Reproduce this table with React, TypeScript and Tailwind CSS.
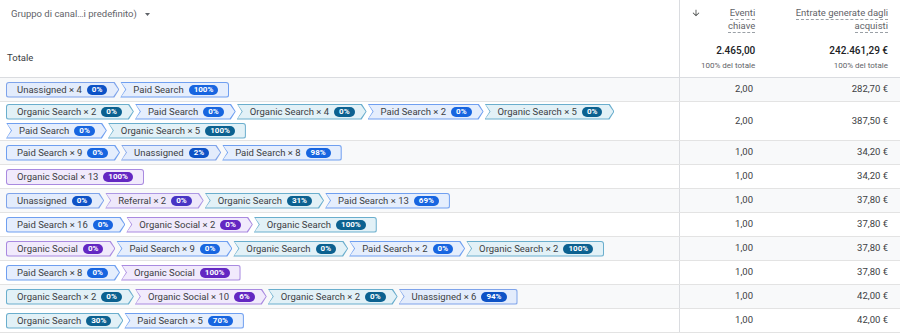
import React from "react";

type Kind = "unassigned" | "paid" | "organic" | "social" | "referral";
type Pos = "only" | "first" | "mid" | "last";

interface Step {
  label: string;
  pct: string;
  kind: Kind;
}

interface PathRow {
  steps: Step[];
  events: string;
  revenue: string;
}

const U = (label: string, pct: string): Step => ({ label, pct, kind: "unassigned" });
const P = (label: string, pct: string): Step => ({ label, pct, kind: "paid" });
const O = (label: string, pct: string): Step => ({ label, pct, kind: "organic" });
const S = (label: string, pct: string): Step => ({ label, pct, kind: "social" });
const R = (label: string, pct: string): Step => ({ label, pct, kind: "referral" });

const rows: PathRow[] = [
  { steps: [U("Unassigned × 4", "0%"), P("Paid Search", "100%")], events: "2,00", revenue: "282,70 €" },
  {
    steps: [
      O("Organic Search × 2", "0%"),
      P("Paid Search", "0%"),
      O("Organic Search × 4", "0%"),
      P("Paid Search × 2", "0%"),
      O("Organic Search × 5", "0%"),
      P("Paid Search", "0%"),
      O("Organic Search × 5", "100%"),
    ],
    events: "2,00",
    revenue: "387,50 €",
  },
  { steps: [P("Paid Search × 9", "0%"), U("Unassigned", "2%"), P("Paid Search × 8", "98%")], events: "1,00", revenue: "34,20 €" },
  { steps: [S("Organic Social × 13", "100%")], events: "1,00", revenue: "34,20 €" },
  {
    steps: [U("Unassigned", "0%"), R("Referral × 2", "0%"), O("Organic Search", "31%"), P("Paid Search × 13", "69%")],
    events: "1,00",
    revenue: "37,80 €",
  },
  { steps: [P("Paid Search × 16", "0%"), S("Organic Social × 2", "0%"), O("Organic Search", "100%")], events: "1,00", revenue: "37,80 €" },
  {
    steps: [
      S("Organic Social", "0%"),
      P("Paid Search × 9", "0%"),
      O("Organic Search", "0%"),
      P("Paid Search × 2", "0%"),
      O("Organic Search × 2", "100%"),
    ],
    events: "1,00",
    revenue: "37,80 €",
  },
  { steps: [P("Paid Search × 8", "0%"), S("Organic Social", "100%")], events: "1,00", revenue: "37,80 €" },
  {
    steps: [O("Organic Search × 2", "0%"), S("Organic Social × 10", "6%"), O("Organic Search × 2", "0%"), U("Unassigned × 6", "94%")],
    events: "1,00",
    revenue: "42,00 €",
  },
  { steps: [O("Organic Search", "30%"), P("Paid Search × 5", "70%")], events: "1,00", revenue: "42,00 €" },
];

const colors: Record<Kind, { edge: string; fill: string; badge: string }> = {
  unassigned: { edge: "bg-[#7ea3ea]", fill: "bg-[#e3ecfc]", badge: "bg-[#0d52c6]" },
  paid: { edge: "bg-[#6f9ff0]", fill: "bg-[#e5eefd]", badge: "bg-[#1765e0]" },
  organic: { edge: "bg-[#6aaecd]", fill: "bg-[#e2f1f7]", badge: "bg-[#0b6190]" },
  social: { edge: "bg-[#a98ae0]", fill: "bg-[#f1eafc]", badge: "bg-[#6327c2]" },
  referral: { edge: "bg-[#ad98e4]", fill: "bg-[#eee8fb]", badge: "bg-[#4734c4]" },
};

// chevron outlines, 5px deep
const shape: Record<Pos, { outer: string; inner: string; pad: string }> = {
  only: { outer: "rounded-[3px]", inner: "rounded-[2px]", pad: "pl-[10px] pr-[10px]" },
  first: {
    outer: "rounded-l-[3px] [clip-path:polygon(0_0,calc(100%_-_5px)_0,100%_50%,calc(100%_-_5px)_100%,0_100%)]",
    inner: "rounded-l-[2px] [clip-path:polygon(0_0,calc(100%_-_5px)_0,100%_50%,calc(100%_-_5px)_100%,0_100%)]",
    pad: "pl-[10px] pr-[11px]",
  },
  mid: {
    outer: "[clip-path:polygon(0_0,calc(100%_-_5px)_0,100%_50%,calc(100%_-_5px)_100%,0_100%,5px_50%)]",
    inner: "[clip-path:polygon(0_0,calc(100%_-_5px)_0,100%_50%,calc(100%_-_5px)_100%,0_100%,5px_50%)]",
    pad: "pl-[12px] pr-[11px]",
  },
  last: {
    outer: "rounded-r-[3px] [clip-path:polygon(0_0,100%_0,100%_100%,0_100%,5px_50%)]",
    inner: "rounded-r-[2px] [clip-path:polygon(0_0,100%_0,100%_100%,0_100%,5px_50%)]",
    pad: "pl-[12px] pr-[10px]",
  },
};

function Chip({ step, pos }: { step: Step; pos: Pos }) {
  const c = colors[step.kind];
  const s = shape[pos];
  return (
    <span className={`flex h-[16px] p-px ${c.edge} ${s.outer}`}>
      <span className={`flex h-full items-center whitespace-nowrap ${c.fill} ${s.inner} ${s.pad}`}>
        <span className="text-[9.5px] leading-[12px] text-[#3c4043]">{step.label}</span>
        <span
          className={`ml-[5px] h-[10px] rounded-full px-[5px] text-[8px] font-bold leading-[10px] text-white ${c.badge}`}
        >
          {step.pct}
        </span>
      </span>
    </span>
  );
}

function posOf(i: number, n: number): Pos {
  if (n === 1) return "only";
  if (i === 0) return "first";
  if (i === n - 1) return "last";
  return "mid";
}

function SortArrow() {
  return (
    <svg width="10" height="10" viewBox="0 0 24 24" className="fill-[#444746]">
      <path d="M20 12l-1.41-1.41L13 16.17V4h-2v12.17l-5.58-5.59L4 12l8 8 8-8z" />
    </svg>
  );
}

export default function App() {
  return (
    <div className="h-[334px] w-[900px] overflow-hidden bg-white [font-family:Roboto,sans-serif]">
      {/* Header */}
      <div className="grid h-[78px] grid-cols-[680px_85px_135px] border-b border-[#dadce0]">
        <div className="border-r border-[#dadce0] pt-[8px]">
          <div className="flex h-[12px] items-center pl-[11px]">
            <span className="text-[9.5px] leading-[12px] text-[#5f6368]">Gruppo di canal…i predefinito)</span>
            <svg width="5" height="3" viewBox="0 0 5 3" className="ml-[8px] fill-[#5f6368]">
              <path d="M0 0h5L2.5 3z" />
            </svg>
          </div>
          <div className="mt-[32px] pl-[7px] text-[9.5px] leading-[12px] text-[#3c4043]">Totale</div>
        </div>

        <div className="flex pl-[11px] pr-[12px] pt-[7px]">
          <div className="pt-px">
            <SortArrow />
          </div>
          <div className="flex flex-1 flex-col items-end whitespace-nowrap">
            <span className="border-b border-dashed border-[#9aa0a6] text-[9.5px] leading-[12px] text-[#5f6368]">Eventi</span>
            <span className="border-b border-dashed border-[#9aa0a6] text-[9.5px] leading-[12px] text-[#5f6368]">chiave</span>
            <span className="mt-[12px] text-[10px] font-medium leading-[12px] text-[#202124]">2.465,00</span>
            <span className="mt-[4px] text-[8px] leading-[10px] text-[#5f6368]">100% del totale</span>
          </div>
        </div>

        <div className="flex flex-col items-end whitespace-nowrap pr-[12px] pt-[7px]">
          <span className="border-b border-dashed border-[#9aa0a6] text-[9.5px] leading-[12px] text-[#5f6368]">
            Entrate generate dagli
          </span>
          <span className="border-b border-dashed border-[#9aa0a6] text-[9.5px] leading-[12px] text-[#5f6368]">acquisti</span>
          <span className="mt-[12px] text-[10px] font-medium leading-[12px] text-[#202124]">242.461,29 €</span>
          <span className="mt-[4px] text-[8px] leading-[10px] text-[#5f6368]">100% del totale</span>
        </div>
      </div>

      {/* Rows */}
      {rows.map((row, r) => (
        <div
          key={r}
          className={`grid grid-cols-[680px_85px_135px] border-b border-[#e3e3e3] ${r % 2 === 0 ? "bg-[#f8f9fa]" : "bg-white"}`}
        >
          <div className="flex min-h-[23px] flex-wrap content-center items-center gap-x-px gap-y-[3px] border-r border-[#dadce0] py-[1.5px] pl-[6px] pr-[8px]">
            {row.steps.map((s, i) => (
              <Chip key={i} step={s} pos={posOf(i, row.steps.length)} />
            ))}
          </div>
          <div className="flex items-center justify-end pr-[12px] text-[9.5px] text-[#3c4043]">{row.events}</div>
          <div className="flex items-center justify-end pr-[12px] text-[9.5px] text-[#3c4043]">{row.revenue}</div>
        </div>
      ))}
    </div>
  );
}
